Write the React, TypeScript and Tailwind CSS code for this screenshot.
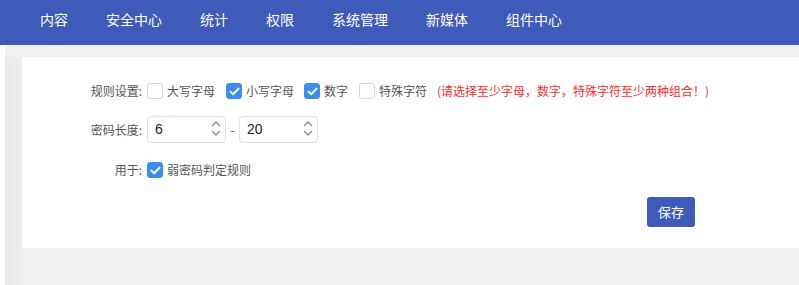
import React, { useState } from 'react';

const navItems = ['内容', '安全中心', '统计', '权限', '系统管理', '新媒体', '组件中心'];

const font = "font-['Microsoft_YaHei','Noto_Sans_CJK_SC',sans-serif]";

const Check: React.FC<{ checked: boolean; label: string; onToggle: () => void; className?: string }> = ({
  checked,
  label,
  onToggle,
  className = '',
}) => (
  <label className={`flex shrink-0 items-center whitespace-nowrap cursor-pointer ${className}`} onClick={onToggle}>
    <span
      className={`flex shrink-0 items-center justify-center w-4 h-4 rounded-[3px] border ${
        checked ? 'bg-[#3b8ef0] border-[#3b8ef0]' : 'bg-white border-[#d4d7de]'
      }`}
    >
      {checked && (
        <svg width="11" height="9" viewBox="0 0 11 9" fill="none">
          <path d="M1.5 4.6L4.2 7.2L9.6 1.6" stroke="white" strokeWidth="2" strokeLinecap="round" strokeLinejoin="round" />
        </svg>
      )}
    </span>
    <span className="ml-[4px] text-[12px] text-[#555]">{label}</span>
  </label>
);

const NumberBox: React.FC<{ value: number; onChange: (v: number) => void }> = ({ value, onChange }) => (
  <div className="relative shrink-0 w-[79px] h-[27px] border border-[#dcdfe6] rounded-[4px] bg-white">
    <span className="absolute left-[7px] top-[4px] text-[14px] leading-[17px] text-[#222] font-['Liberation_Sans',Arial,sans-serif]">
      {value}
    </span>
    <div className="absolute right-[4px] top-[3px] flex flex-col gap-[3px]">
      <button onClick={() => onChange(value + 1)} className="block">
        <svg width="10" height="7" viewBox="0 0 10 7" fill="none">
          <path d="M1.5 5.5L5 2L8.5 5.5" stroke="#8a8a8a" strokeWidth="1.4" strokeLinecap="round" />
        </svg>
      </button>
      <button onClick={() => onChange(value - 1)} className="block">
        <svg width="10" height="7" viewBox="0 0 10 7" fill="none">
          <path d="M1.5 1.5L5 5L8.5 1.5" stroke="#8a8a8a" strokeWidth="1.4" strokeLinecap="round" />
        </svg>
      </button>
    </div>
  </div>
);

const App: React.FC = () => {
  const [upper, setUpper] = useState(false);
  const [lower, setLower] = useState(true);
  const [digit, setDigit] = useState(true);
  const [special, setSpecial] = useState(false);
  const [weak, setWeak] = useState(true);
  const [minLen, setMinLen] = useState(6);
  const [maxLen, setMaxLen] = useState(20);

  return (
    <div className={`flex flex-col h-[285px] bg-white overflow-hidden ${font}`}>
      {/* top nav */}
      <nav className="flex h-[45px] shrink-0 bg-[#3f5bba] pl-[21px]">
        {navItems.map((item) => (
          <a key={item} className="px-[19px] pt-[10px] text-[14px] leading-[18px] text-white cursor-pointer whitespace-nowrap">
            {item}
          </a>
        ))}
      </nav>

      <div className="flex flex-1">
        <div className="w-[5px] bg-white" />
        <div className="flex flex-col flex-1 bg-[#f0f0f0] pt-[12px]">
          <div className="flex flex-1">
            <div className="w-[17px] bg-gradient-to-r from-[#e8e8e8] to-[#efefef]" />
            <div className="flex-1 self-start flex flex-col bg-white h-[191px] pt-[20px] pl-[40px] whitespace-nowrap">
              <div className="w-[633px]">
                {/* row 1 */}
                <div className="flex items-center h-[28px]">
                  <span className="w-[80px] shrink-0 text-right text-[12px] text-[#555]">规则设置:</span>
                  <div className="flex items-center ml-[5px]">
                    <Check checked={upper} label="大写字母" onToggle={() => setUpper(!upper)} />
                    <Check checked={lower} label="小写字母" onToggle={() => setLower(!lower)} className="ml-[11px]" />
                    <Check checked={digit} label="数字" onToggle={() => setDigit(!digit)} className="ml-[10px]" />
                    <Check checked={special} label="特殊字符" onToggle={() => setSpecial(!special)} className="ml-[11px]" />
                    <span className="shrink-0 ml-[10px] text-[12px] text-[#ff2a2a]">(请选择至少字母，数字，特殊字符至少两种组合！)</span>
                  </div>
                </div>

                {/* row 2 */}
                <div className="flex items-center h-[27px] mt-[11px]">
                  <span className="w-[80px] shrink-0 text-right text-[12px] text-[#555]">密码长度:</span>
                  <div className="flex items-center ml-[5px]">
                    <NumberBox value={minLen} onChange={setMinLen} />
                    <span className="w-[13px] text-center text-[12px] text-[#555]">-</span>
                    <NumberBox value={maxLen} onChange={setMaxLen} />
                  </div>
                </div>

                {/* row 3 */}
                <div className="flex items-center h-[28px] mt-[13px]">
                  <span className="w-[80px] shrink-0 text-right text-[12px] text-[#555]">用于:</span>
                  <Check checked={weak} label="弱密码判定规则" onToggle={() => setWeak(!weak)} className="ml-[5px]" />
                </div>

                <div className="flex justify-end mt-[13px]">
                  <button className="w-[48px] h-[30px] rounded-[3px] bg-[#3f5bba] text-white text-[13px]">保存</button>
                </div>
              </div>
            </div>
          </div>
        </div>
      </div>
    </div>
  );
};

export default App;
